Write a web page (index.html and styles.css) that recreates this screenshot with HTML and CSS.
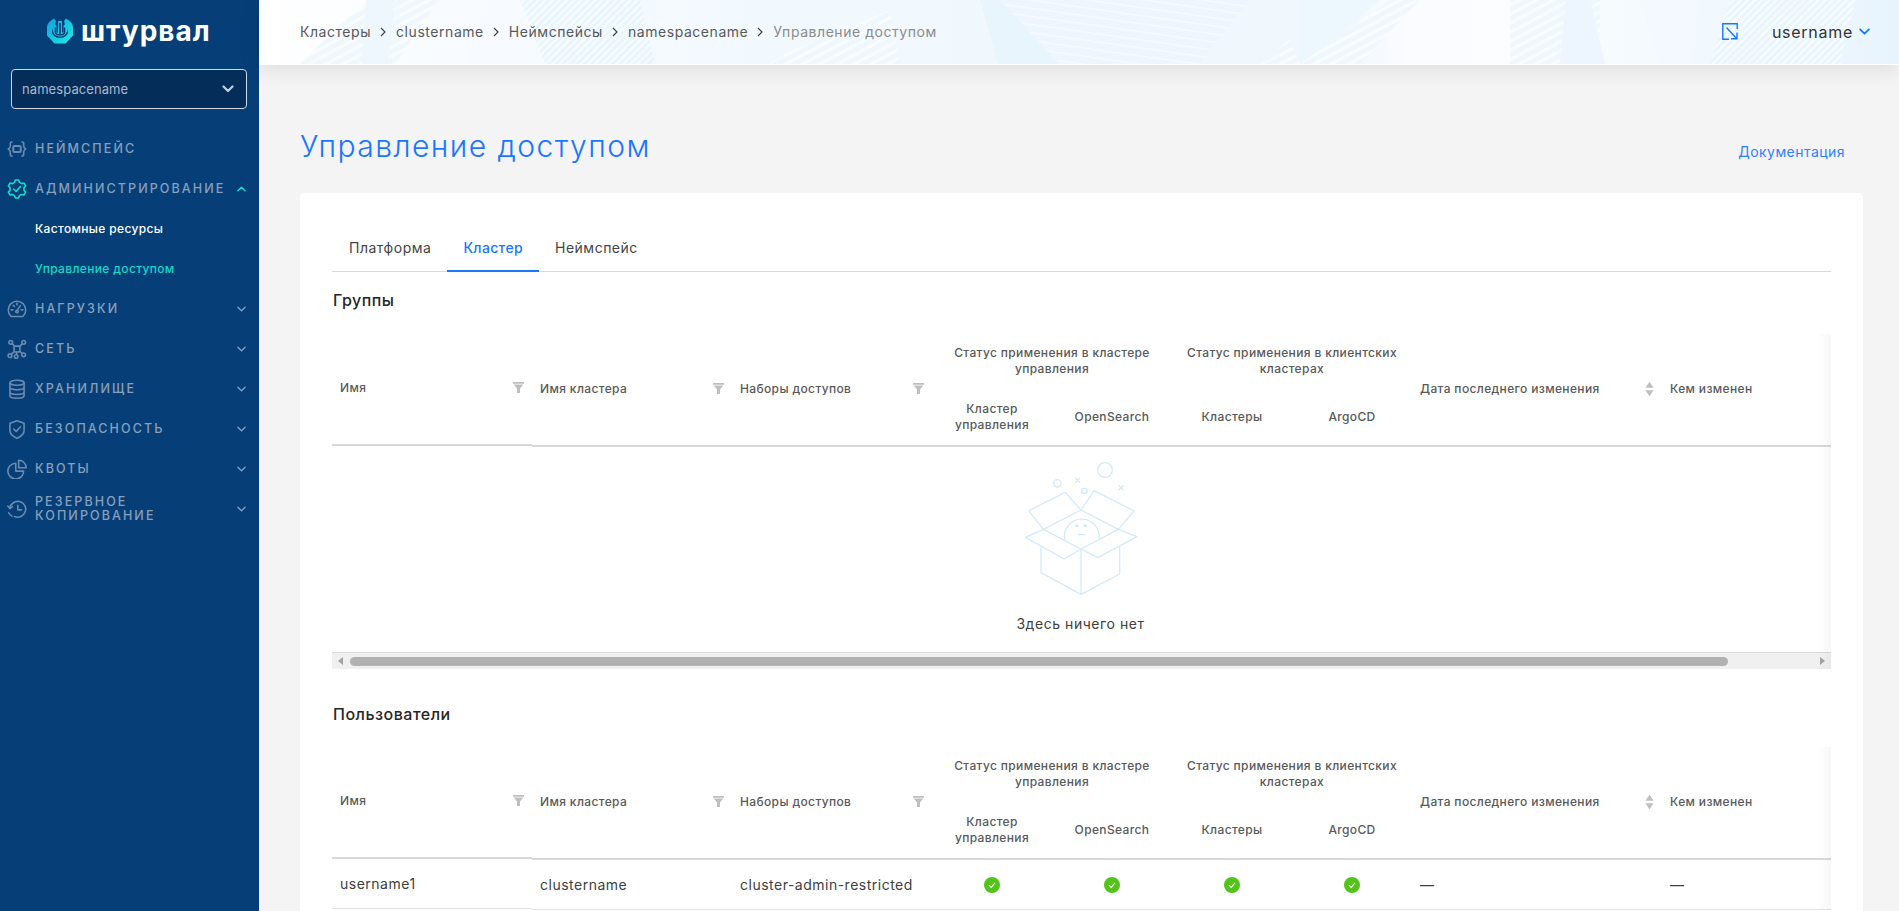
FILE: index.html
```html
<!DOCTYPE html>
<html lang="ru">
<head>
<meta charset="utf-8">
<title>Управление доступом</title>
<link rel="stylesheet" href="styles.css">
</head>
<body>
<svg class="defs" aria-hidden="true">
  <symbol id="chev" viewBox="0 0 10 6"><path d="M1 1l4 4 4-4" fill="none" stroke="currentColor" stroke-width="1.6" stroke-linecap="round" stroke-linejoin="round"/></symbol>
  <symbol id="chev-b" viewBox="0 0 12 8"><path d="M1.500 1.500L6 6l4.500-4.500" fill="none" stroke="currentColor" stroke-width="2.200" stroke-linecap="round" stroke-linejoin="round"/></symbol>
  <symbol id="crumb" viewBox="0 0 6 10"><path d="M1 1l4 4-4 4" fill="none" stroke="currentColor" stroke-width="1.2"/></symbol>
  <symbol id="filter" viewBox="0 0 11 11"><path d="M0 0h11v1.800H0zM.8 2.600h9.400L7 6.600V11H4V6.600z" fill="currentColor"/></symbol>
  <symbol id="sort" viewBox="0 0 10 16"><path d="M5 0l4.500 6.500H.5zM5 16L.5 9.500h9z" fill="currentColor"/></symbol>
  <symbol id="ok" viewBox="0 0 16 16"><circle cx="8" cy="8" r="8" fill="#52c41a"/><path d="M5 8.200l2.200 2.300L11 5.800" fill="none" stroke="#fff" stroke-width="1.100"/></symbol>
  <symbol id="box" viewBox="123 30 360 420">
    <g fill="none" stroke="#d3eafc" stroke-width="4" stroke-linejoin="round" stroke-linecap="round">
      <path d="M190 238L146 182 256 127 303 180 342 122 462 183 415 238"/>
      <path d="M190 238L303 180 415 238"/>
      <path d="M190 238L136 262 253 327 303 297 353 323 471 260 415 238 303 297 190 238"/>
      <path d="M183 290V368L303 433 419 372V290M303 297V433"/>
      <path d="M255 272A52 52 0 1 1 357 266"/>
      <path d="M295 254H314"/>
      <circle cx="375" cy="60" r="22"/><circle cx="232" cy="100" r="11"/><circle cx="313" cy="123" r="8"/>
      <path d="M287 85l12 12M299 85l-12 12M417 107l12 12M429 107l-12 12"/>
    </g>
    <circle cx="291" cy="227" r="5" fill="#d3eafc"/><circle cx="316" cy="227" r="5" fill="#d3eafc"/>
  </symbol>
</svg>

<div class="app">
  <aside class="sidebar">
    <div class="logo">
      <svg class="logo-mark" viewBox="0 0 26 26">
        <defs><linearGradient id="lg" x1="0" y1="0" x2="1" y2="1"><stop offset="0" stop-color="#149fdc"/><stop offset="1" stop-color="#1eebe9"/></linearGradient></defs>
        <path d="M7 .5L9 3 7.500 8.500C5.800 10 5 11.500 5 13.500 5 17 8 20 13 20s8-3 8-6.500c0-2-.8-3.500-2.500-5L17 3l2-2.500C23.500 3 26 6 26 9v8.500L18.500 25.500h-11L0 17.500V9C0 6 2.500 3 7 .5z" fill="url(#lg)"/>
        <path d="M5.500 11c.6 5 3.500 7.500 7.500 7.500s6.900-2.500 7.500-7.500l-2-5-2 1.500V14l-1.500 1V3h-4v12l-1.500-1V7.500l-2-1.500z" fill="url(#lg)"/>
        <path d="M8.500 9.500v4.500c0 2 2 3 4.500 3s4.500-1 4.500-3V9.500" fill="none" stroke="#063f78" stroke-width="1.600"/>
        <path d="M13 5v11" stroke="#063f78" stroke-width="1.800"/>
      </svg>
      <span class="logo-text">штурвал</span>
    </div>
    <div class="select">
      <span>namespacename</span>
      <svg class="select-chev"><use href="#chev-b"/></svg>
    </div>
    <nav class="nav">
      <a class="nav-item">
        <svg class="nav-icon" viewBox="0 0 24 24"><path d="M6 3.500C3.500 3.500 4 5 4 8c0 2-.5 3-2.500 4C3.500 13 4 14 4 16c0 3-.5 4.500 2 4.500M18 3.500c2.500 0 2 1.500 2 4.500 0 2 .5 3 2.500 4-2 1-2.500 2-2.500 4 0 3 .5 4.500-2 4.500"/><rect x="7.500" y="8.500" width="9" height="7" rx="1.500" stroke-width="2.400"/></svg>
        <span class="nav-label">Неймспейс</span>
      </a>
      <a class="nav-item open">
        <svg class="nav-icon" viewBox="0 0 24 24"><path d="M10.090 1.170H13.910L14.910 4.010 17.460 5.490 20.430 4.930 22.340 8.240 20.370 10.520V13.480L22.340 15.760 20.430 19.070 17.460 18.510 14.910 19.990 13.910 22.830H10.090L9.090 19.990 6.540 18.510 3.570 19.070 1.660 15.760 3.630 13.480V10.520L1.660 8.240 3.570 4.930 6.540 5.490 9.090 4.010z"/><path d="M8 12l3 3 5-6"/></svg>
        <span class="nav-label">Администрирование</span>
        <svg class="nav-chev flip"><use href="#chev"/></svg>
      </a>
      <a class="sub-item sub-first">Кастомные ресурсы</a>
      <a class="sub-item current">Управление доступом</a>
      <a class="nav-item">
        <svg class="nav-icon" viewBox="0 0 24 24"><path d="M5 21A10.500 10.500 0 1 1 19 21Z"/><path d="M12 14l4-6M5 13H7M17 13h2M7.500 7.500l1.500 1.500M12 5v2"/><circle cx="12" cy="15" r="1.500"/></svg>
        <span class="nav-label">Нагрузки</span>
        <svg class="nav-chev"><use href="#chev"/></svg>
      </a>
      <a class="nav-item">
        <svg class="nav-icon" viewBox="0 0 24 24"><rect x="8.500" y="8.500" width="7" height="7" rx="1.500"/><circle cx="4.500" cy="4" r="2.200"/><circle cx="20" cy="4" r="2.200"/><circle cx="3.500" cy="20" r="2.200"/><circle cx="11" cy="21" r="2.200"/><circle cx="20" cy="19" r="2.200"/><path d="M6 5.500l3 3M18.500 5.500l-3 3M5 18.500l3.500-3M11.500 15.500v3.200M15.500 15l3 2.500"/></svg>
        <span class="nav-label">Сеть</span>
        <svg class="nav-chev"><use href="#chev"/></svg>
      </a>
      <a class="nav-item">
        <svg class="nav-icon" viewBox="0 0 24 24"><ellipse cx="12" cy="4.500" rx="8.500" ry="3"/><path d="M3.500 4.500V20c0 2 3.500 3 8.500 3s8.500-1 8.500-3V4.500M3.500 10c0 2 3.500 3 8.500 3s8.500-1 8.500-3M3.500 15.500c0 2 3.500 3 8.500 3s8.500-1 8.500-3M6.500 12h1M6.500 18h1"/></svg>
        <span class="nav-label">Хранилище</span>
        <svg class="nav-chev"><use href="#chev"/></svg>
      </a>
      <a class="nav-item">
        <svg class="nav-icon" viewBox="0 0 24 24"><path d="M12 2l8.500 3v9c0 4-4 7-8.500 9-4.500-2-8.500-5-8.500-9V5z"/><path d="M8 12l3 3 5-5.500"/></svg>
        <span class="nav-label">Безопасность</span>
        <svg class="nav-chev"><use href="#chev"/></svg>
      </a>
      <a class="nav-item">
        <svg class="nav-icon" viewBox="0 0 24 24"><path d="M10.500 5A9.500 9.500 0 1 0 20 14.500H10.500z"/><path d="M14 1.500A9 9 0 0 1 23 10.500H14z"/></svg>
        <span class="nav-label">Квоты</span>
        <svg class="nav-chev"><use href="#chev"/></svg>
      </a>
      <a class="nav-item">
        <svg class="nav-icon" viewBox="0 0 24 24"><path d="M3.500 11A9.500 9.500 0 1 1 9 21"/><path d="M1 8.500l2.500 3 3-2.500M13 7.500v5.500h4.500M2 16.500c1 2 2 3 4 4"/></svg>
        <span class="nav-label">Резервное копирование</span>
        <svg class="nav-chev"><use href="#chev"/></svg>
      </a>
    </nav>
  </aside>

  <main class="main">
    <header class="topbar">
      <svg class="topbar-art" viewBox="259 0 1640 64" preserveAspectRatio="none" aria-hidden="true">
        <defs>
          <linearGradient id="base">
            <stop offset="0" stop-color="#ffffff"/><stop offset=".1" stop-color="#f9fcff"/><stop offset=".22" stop-color="#f4faff"/><stop offset=".45" stop-color="#f0f8fe"/><stop offset=".66" stop-color="#f0f8fe"/><stop offset=".7" stop-color="#fafcff"/><stop offset=".76" stop-color="#fbfdff"/><stop offset=".88" stop-color="#f2f9fe"/><stop offset="1" stop-color="#e8f4fd"/>
          </linearGradient>
          <pattern id="d1" width="5" height="5" patternUnits="userSpaceOnUse" patternTransform="rotate(45)"><rect width="5" height="5" fill="#eaf6fe"/><rect width="2" height="5" fill="#f8fcff"/></pattern>
          <pattern id="d2" width="8" height="8" patternUnits="userSpaceOnUse" patternTransform="rotate(-28)"><rect width="8" height="8" fill="#f0f8fe"/><rect width="8" height="3" fill="#f9fcff"/></pattern>
          <pattern id="d3" width="8" height="8" patternUnits="userSpaceOnUse" patternTransform="rotate(8)"><rect width="8" height="8" fill="#edf6fe"/><rect width="8" height="1.500" fill="#f6fbff"/></pattern>
        </defs>
        <rect x="259" y="0" width="1640" height="64" fill="url(#base)"/>
        <polygon points="300,64 345,20 372,0 440,0 395,64" fill="url(#d2)"/>
        <polygon points="366,0 395,0 388,64 362,64" fill="#eff7fe"/>
        <polygon points="490,0 545,0 525,64 465,64" fill="#f7fbff"/>
        <polygon points="520,0 640,0 655,64 545,64" fill="url(#d1)"/>
        <polygon points="760,64 890,10 900,64" fill="url(#d2)"/>
        <polygon points="980,0 1000,0 1060,64 998,64" fill="#e8f5fd"/>
        <polygon points="1000,0 1250,0 1200,64 1060,64" fill="url(#d3)"/>
        <polygon points="1260,64 1290,38 1300,64" fill="url(#d2)"/>
        <polygon points="1300,64 1380,0 1300,0" fill="#edf7fe"/>
        <polygon points="1300,64 1390,0 1420,0 1360,64" fill="url(#d2)"/>
        <polygon points="1510,0 1600,0 1600,64 1510,64" fill="url(#d2)"/>
        <polygon points="1566,0 1590,0 1605,64 1560,64" fill="#edf6fe"/>
        <polygon points="1640,0 1700,0 1690,64 1660,64" fill="#f3f9ff"/>
        <polygon points="1730,0 1855,0 1840,64 1710,64" fill="url(#d1)"/>
      </svg>
      <nav class="crumbs">
        <a>Кластеры</a><svg class="crumb-sep"><use href="#crumb"/></svg>
        <a>clustername</a><svg class="crumb-sep"><use href="#crumb"/></svg>
        <a>Неймспейсы</a><svg class="crumb-sep"><use href="#crumb"/></svg>
        <a>namespacename</a><svg class="crumb-sep"><use href="#crumb"/></svg>
        <span class="crumb-last">Управление доступом</span>
      </nav>
      <div class="user">
        <svg class="exit" viewBox="0 0 16 17"><path d="M15.200 6V.8H.8v15.400h6.200M4.500 4.500l10 11M15 9.500v6.200H9" fill="none" stroke="#1a76ff" stroke-width="1.400"/></svg>
        <span class="user-name">username</span>
        <svg class="user-chev"><use href="#chev"/></svg>
      </div>
    </header>

    <div class="content">
      <div class="title-row">
        <h1>Управление доступом</h1>
        <a class="doc">Документация</a>
      </div>
      <section class="card">
        <div class="tabs">
          <a class="tab">Платформа</a>
          <a class="tab active">Кластер</a>
          <a class="tab">Неймспейс</a>
        </div>

        <h2 class="first">Группы</h2>
        <div class="table-wrap">
          <table>
            <colgroup><col class="c200"><col class="c200"><col class="c200"><col class="c120"><col class="c120"><col class="c120"><col class="c120"><col class="c250"><col class="c264"></colgroup>
            <thead>
              <tr>
                <th rowspan="2" class="col-first"><div class="th-flex"><span>Имя</span><svg class="th-filter"><use href="#filter"/></svg></div></th>
                <th rowspan="2"><div class="th-flex"><span>Имя кластера</span><svg class="th-filter"><use href="#filter"/></svg></div></th>
                <th rowspan="2"><div class="th-flex"><span>Наборы доступов</span><svg class="th-filter"><use href="#filter"/></svg></div></th>
                <th colspan="2" class="center group">Статус применения в кластере управления</th>
                <th colspan="2" class="center group">Статус применения в клиентских кластерах</th>
                <th rowspan="2"><div class="th-flex"><span>Дата последнего изменения</span><svg class="th-sort"><use href="#sort"/></svg></div></th>
                <th rowspan="2">Кем изменен</th>
              </tr>
              <tr>
                <th class="center sub">Кластер управления</th>
                <th class="center sub">OpenSearch</th>
                <th class="center sub">Кластеры</th>
                <th class="center sub">ArgoCD</th>
              </tr>
            </thead>
          </table>
          <div class="empty">
            <svg class="empty-art"><use href="#box"/></svg>
            <p>Здесь ничего нет</p>
          </div>
          <div class="scrollbar">
            <span class="arrow left"></span>
            <span class="thumb"></span>
            <span class="arrow right"></span>
          </div>
          <span class="edge-shadow"></span>
        </div>

        <h2>Пользователи</h2>
        <div class="table-wrap">
          <table>
            <colgroup><col class="c200"><col class="c200"><col class="c200"><col class="c120"><col class="c120"><col class="c120"><col class="c120"><col class="c250"><col class="c264"></colgroup>
            <thead>
              <tr>
                <th rowspan="2" class="col-first"><div class="th-flex"><span>Имя</span><svg class="th-filter"><use href="#filter"/></svg></div></th>
                <th rowspan="2"><div class="th-flex"><span>Имя кластера</span><svg class="th-filter"><use href="#filter"/></svg></div></th>
                <th rowspan="2"><div class="th-flex"><span>Наборы доступов</span><svg class="th-filter"><use href="#filter"/></svg></div></th>
                <th colspan="2" class="center group">Статус применения в кластере управления</th>
                <th colspan="2" class="center group">Статус применения в клиентских кластерах</th>
                <th rowspan="2"><div class="th-flex"><span>Дата последнего изменения</span><svg class="th-sort"><use href="#sort"/></svg></div></th>
                <th rowspan="2">Кем изменен</th>
              </tr>
              <tr>
                <th class="center sub">Кластер управления</th>
                <th class="center sub">OpenSearch</th>
                <th class="center sub">Кластеры</th>
                <th class="center sub">ArgoCD</th>
              </tr>
            </thead>
            <tbody>
              <tr>
                <td class="col-first">username1</td>
                <td>clustername</td>
                <td>cluster-admin-restricted</td>
                <td class="center"><svg class="ok"><use href="#ok"/></svg></td>
                <td class="center"><svg class="ok"><use href="#ok"/></svg></td>
                <td class="center"><svg class="ok"><use href="#ok"/></svg></td>
                <td class="center"><svg class="ok"><use href="#ok"/></svg></td>
                <td>—</td>
                <td>—</td>
              </tr>
            </tbody>
          </table>
          <span class="edge-shadow"></span>
        </div>
      </section>
    </div>
  </main>
</div>
</body>
</html>
```

FILE: styles.css
```css
* { box-sizing: border-box; }
html, body { margin: 0; height: 100%; overflow: hidden; }
body {
  font-family: Inter, "Noto Sans", "Liberation Sans", sans-serif;
  font-size: 14px;
  color: #333;
  background: #f4f4f4;
}
.defs { display: none; }

.app { display: flex; height: 911px; }

/* sidebar */
.sidebar { width: 259px; flex: none; background: #063f78; }
.logo { height: 69px; display: flex; align-items: center; padding: 0 0 8px 47px; gap: 8px; }
.logo-mark { width: 26px; height: 26px; }
.logo-text { font-size: 28px; font-weight: 700; color: #fff; letter-spacing: 1px; line-height: 30px; }
.select {
  margin-left: 11px; width: 236px; height: 40px;
  display: flex; align-items: center; justify-content: space-between;
  padding: 0 12px 0 10px;
  background: #042d5a; border: 1px solid #cfd8e3; border-radius: 4px;
  color: #a9bbd0; font-size: 13px; letter-spacing: .08px;
}
.select-chev { width: 12px; height: 8px; color: #c4d0dd; }
.nav { margin-top: 20px; }
.nav-item {
  height: 40px; display: flex; align-items: center;
  padding-left: 7px; padding-right: 13px;
  color: #88a0bc;
}
.nav-icon {
  width: 20px; height: 20px; flex: none; margin-right: 8px;
  fill: none; stroke: #6b8bae; stroke-width: 1.9; stroke-linejoin: round; stroke-linecap: round;
}
.nav-label {
  flex: 1; font-size: 12.5px; font-weight: 500; line-height: 14px;
  letter-spacing: 2.1px; text-transform: uppercase;
}
.nav-chev { width: 9px; height: 6px; color: #7f9dbd; flex: none; }
.nav-chev.flip { transform: rotate(180deg); color: #14dcd0; }
.open .nav-icon { stroke: #14dcd0; }
.sub-item {
  display: flex; align-items: center; height: 40px; padding-left: 35px;
  font-size: 12px; font-weight: 500; letter-spacing: .35px; color: #fff;
}
.sub-first { margin: -1px 0 1px; }
.sub-item.current { color: #14d8c8; margin-bottom: 1px; margin-top: -1px; }

/* main */
.main { flex: 1; min-width: 0; display: flex; flex-direction: column; }
.topbar {
  position: relative; z-index: 2; height: 65px; flex: none;
  display: flex; align-items: center; justify-content: space-between;
  padding: 0 29px 1px 41px;
  background: #fff;
  border-bottom: 1px solid #fff;
  box-shadow: 0 4px 20px rgba(0, 0, 0, .1);
}
.topbar-art { position: absolute; left: 0; top: 0; width: 100%; height: 64px; }
.crumbs, .user { position: relative; display: flex; align-items: center; }
.crumbs { color: #595959; letter-spacing: .55px; }
.crumb-sep { width: 6px; height: 10px; margin: 0 10px 0 9px; color: #444; }
.crumb-last { color: #8c8c8c; }
.exit { width: 16px; height: 17px; margin-right: 34px; }
.user-name { font-size: 16px; letter-spacing: .72px; color: #333; }
.user-chev { width: 11px; height: 7px; margin-left: 6px; color: #1a76ff; }

.content { flex: 1; padding: 61px 36px 0 41px; min-height: 0; }
.title-row { display: flex; justify-content: space-between; height: 40px; margin-bottom: 27px; }
h1 { margin: 0; font-size: 30px; line-height: 40px; font-weight: 300; color: #1a76ff; letter-spacing: 1.46px; }
.doc { margin: 16px 18px 0 0; line-height: 20px; font-size: 14px; letter-spacing: .45px; color: #2f80ff; }

.card { background: #fff; border-radius: 4px; padding: 32px 32px 0; height: 740px; overflow: hidden; }
.tabs { display: flex; height: 47px; padding-left: 1px; border-bottom: 1px solid #d9d9d9; }
.tab { height: 47px; padding: 0 16px; display: flex; align-items: center; letter-spacing: .5px; color: #444; border-bottom: 2px solid transparent; }
.tab.active { color: #1a76ff; font-weight: 500; letter-spacing: .35px; border-bottom-color: #1a76ff; }

h2 { margin: 33px 0 21px; padding-left: 1px; font-size: 16px; line-height: 24px; font-weight: 500; color: #262626; letter-spacing: .5px; }
h2.first { margin-top: 16px; margin-bottom: 22px; }

.table-wrap { position: relative; overflow: hidden; }
table { width: 1594px; table-layout: fixed; border-collapse: separate; border-spacing: 0; }
.c200 { width: 200px; } .c120 { width: 120px; } .c250 { width: 250px; } .c264 { width: 264px; }
th { padding: 0 8px 2px; text-align: left; font-size: 12px; line-height: 16px; font-weight: 500; color: #595959; letter-spacing: .36px; }
thead tr:first-child th { height: 56px; }
thead tr:first-child th[rowspan] { border-bottom: 2px solid #d9d9d9; }
thead tr + tr th { height: 57px; border-bottom: 2px solid #d9d9d9; }
.center { text-align: center; }
.group { padding: 0 8px 2px; }
.sub { padding: 0 12px 2px; }
.col-first { transform: translateY(-1px); }
.th-flex { display: flex; align-items: center; justify-content: space-between; }
.th-filter { width: 11px; height: 11px; color: #bfbfbf; flex: none; }
.th-sort { width: 9px; height: 16px; color: #bfbfbf; flex: none; }
td { height: 50px; padding: 0 8px; border-bottom: 1px solid #e3e3e3; font-size: 14px; letter-spacing: .5px; color: #404040; }
.ok { display: block; width: 16px; height: 16px; margin: 0 auto; }

.empty { height: 205px; padding: 13px 2px 0 0; display: flex; flex-direction: column; align-items: center; }
.empty-art { width: 120px; height: 140px; flex: none; }
.empty p { margin: 14px 0 0; line-height: 20px; letter-spacing: .55px; color: #404040; }

.scrollbar {
  height: 17px; display: flex; align-items: center; gap: 6px; padding: 0 6px;
  background: #f0f0f0; border-top: 1px solid #dcdcdc;
}
.thumb { display: block; width: 1378px; height: 9px; margin-left: 1px; border-radius: 5px; background: #b1b1b1; }
.arrow { width: 0; height: 0; border-top: 4px solid transparent; border-bottom: 4px solid transparent; }
.arrow.left { border-right: 5px solid #a3a3a3; }
.arrow.right { margin-left: auto; border-left: 5px solid #a3a3a3; }
.edge-shadow { position: absolute; top: 0; right: 0; bottom: 0; width: 14px; pointer-events: none; background: linear-gradient(90deg, rgba(0,0,0,0), rgba(0,0,0,.03)); }
```
